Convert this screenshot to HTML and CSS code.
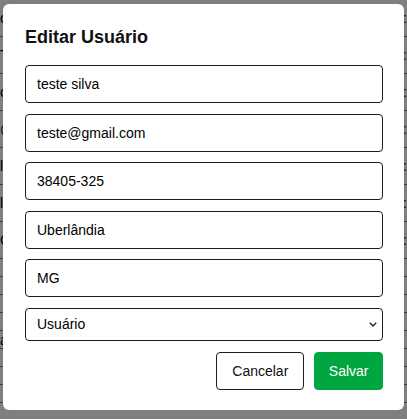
FILE: index.html
```html
<!DOCTYPE html>
<html lang="pt-BR">
<head>
<meta charset="utf-8">
<title>Editar Usuário</title>
<link rel="stylesheet" href="styles.css">
</head>
<body>
<div class="page">
  <div class="row tall"><span class="cell">o</span><span class="end">:</span></div>
  <div class="row tall"><span class="cell">T</span><span class="end">:</span></div>
  <div class="row tall"><span class="cell">c</span><span class="end">:</span></div>
  <div class="row tall"><span class="cell">@</span><span class="end">:</span></div>
  <div class="row tall"><span class="cell">l</span><span class="end">:</span></div>
  <div class="row tall"><span class="cell">l</span><span class="end">:</span></div>
  <div class="row tall"><span class="cell">C</span><span class="end">:</span></div>
  <div class="row short"><span class="cell"></span></div>
  <div class="row short"><span class="cell"></span></div>
  <div class="row short"><span class="cell"></span></div>
  <div class="row short"><span class="cell"></span></div>
  <div class="row short"><span class="cell">a</span></div>
  <div class="row short"><span class="cell"></span></div>
  <div class="row short"><span class="cell"></span></div>
  <div class="row short"><span class="cell"></span></div>
</div>
<div class="overlay"></div>
<div class="modal">
  <h2 class="title">Editar Usuário</h2>
  <form class="form">
    <input class="field" type="text" value="teste silva">
    <input class="field" type="text" value="teste@gmail.com">
    <input class="field" type="text" value="38405-325">
    <input class="field" type="text" value="Uberlândia">
    <input class="field" type="text" value="MG">
    <div class="select-wrap">
      <select class="field select">
        <option>Usuário</option>
        <option>Administrador</option>
      </select>
      <svg class="chevron" width="8" height="5" viewBox="0 0 8 5" aria-hidden="true">
        <path d="M0.8 0.8 L4 4 L7.2 0.8" fill="none" stroke="#222" stroke-width="1.4"/>
      </svg>
    </div>
    <div class="actions">
      <button type="button" class="btn btn-cancel">Cancelar</button>
      <button type="button" class="btn btn-save">Salvar</button>
    </div>
  </form>
</div>
</body>
</html>
```
FILE: styles.css
```css
html, body {
  margin: 0;
  padding: 0;
}
body {
  font-family: "Liberation Sans", Arial, sans-serif;
  background: #ffffff;
  width: 407px;
  height: 419px;
  overflow: hidden;
}
.page {
  display: flex;
  flex-direction: column;
}
.row {
  display: flex;
  justify-content: space-between;
  align-items: center;
  border-bottom: 1px solid #7a7a7a;
  font-size: 14px;
  color: #000;
}
.row.tall {
  height: 36px;
}
.row.short {
  height: 17px;
}
.overlay {
  position: fixed;
  inset: 0;
  background: rgba(0, 0, 0, 0.5);
}
.modal {
  position: fixed;
  left: 3px;
  top: 4px;
  width: 401px;
  box-sizing: border-box;
  background: #ffffff;
  border-radius: 6px;
  padding: 23px 21px 20px 22px;
}
.title {
  margin: 0 0 17px;
  font-size: 18px;
  line-height: 21px;
  font-weight: bold;
  color: #111111;
}
.form {
  display: flex;
  flex-direction: column;
  gap: 10.5px;
  margin: 0;
}
.field {
  box-sizing: border-box;
  height: 38px;
  width: 100%;
  border: 1px solid #1e1e1e;
  border-radius: 4px;
  padding: 0 11px;
  font-family: "Liberation Sans", Arial, sans-serif;
  font-size: 14px;
  color: #000000;
  background: #ffffff;
  margin: 0;
  outline: none;
}
.select-wrap {
  position: relative;
  display: flex;
}
.select {
  height: 33px;
  padding: 0 11px;
  appearance: none;
  -webkit-appearance: none;
}
.chevron {
  position: absolute;
  right: 6px;
  top: 14px;
  pointer-events: none;
}
.actions {
  display: flex;
  justify-content: flex-end;
  gap: 10px;
  margin-top: 0.5px;
}
.btn {
  box-sizing: border-box;
  height: 38px;
  font-family: "Liberation Sans", Arial, sans-serif;
  font-size: 14px;
  border-radius: 4px;
  margin: 0;
  cursor: pointer;
}
.btn-cancel {
  padding: 0 15px;
  background: #ffffff;
  color: #111111;
  border: 1px solid #1e1e1e;
}
.btn-save {
  padding: 0 13.5px;
  background: #00a63f;
  color: #ffffff;
  border: 1px solid #00a63f;
}
```
